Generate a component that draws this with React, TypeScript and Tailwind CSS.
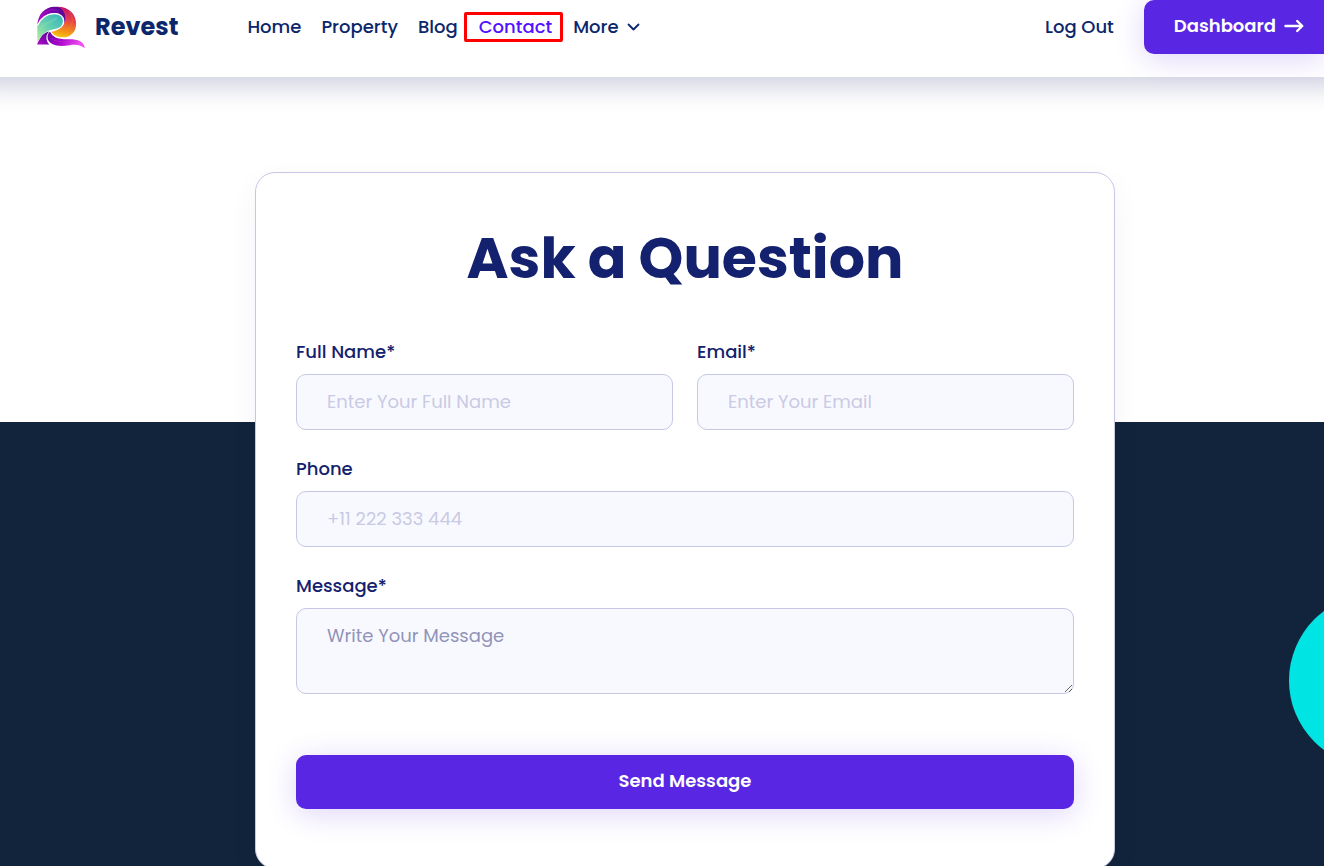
import type { ReactNode } from "react";

function LogoMark() {
  return (
    <svg viewBox="50 16 146 130" className="h-[43px] w-12 shrink-0" aria-hidden="true">
      <defs>
        <linearGradient id="sun" x1="0.6" y1="0" x2="0.4" y2="1">
          <stop offset="0" stopColor="#c40e6c" />
          <stop offset="0.4" stopColor="#e8414b" />
          <stop offset="0.75" stopColor="#f38b1c" />
          <stop offset="1" stopColor="#f6c40f" />
        </linearGradient>
        <linearGradient id="crest" x1="0" y1="1" x2="1" y2="0.2">
          <stop offset="0" stopColor="#b012c8" />
          <stop offset="0.5" stopColor="#8a05b4" />
          <stop offset="1" stopColor="#4d0793" />
        </linearGradient>
        <linearGradient id="sea" x1="0.9" y1="0" x2="0.1" y2="1">
          <stop offset="0" stopColor="#35b5bd" />
          <stop offset="0.5" stopColor="#66cfb0" />
          <stop offset="1" stopColor="#b4ef9c" />
        </linearGradient>
        <linearGradient id="tail" x1="0" y1="0" x2="1" y2="0.3">
          <stop offset="0" stopColor="#6a04a0" />
          <stop offset="0.5" stopColor="#a808ca" />
          <stop offset="1" stopColor="#f14df2" />
        </linearGradient>
      </defs>
      <path d="M108 18C146 16 169 40 169 70C169 94 152 111 127 111C112 111 100 104 94 94C116 91 134 77 134 56C134 38 126 25 108 18Z" fill="url(#sun)" />
      <path d="M148 33C170 60 153 87 124 100" fill="none" stroke="#f9a01b" strokeOpacity="0.2" strokeWidth="5" />
      <path d="M51 79C51 42 73 18 104 18C128 18 142 41 134 68C131 50 120 37 103 37C80 37 64 52 51 79Z" fill="url(#crest)" />
      <path d="M58 56C73 29 97 22 116 31" fill="none" stroke="#d31bd0" strokeOpacity="0.35" strokeWidth="4" />
      <path d="M51 76C62 51 80 39 103 39C121 39 131 49 131 61C131 77 117 86 101 88C78 91 66 103 51 129Z" fill="url(#sea)" />
      <path d="M51 76C62 51 80 39 103 39C121 39 131 49 131 61C131 77 117 86 101 88C78 91 66 103 51 129" fill="none" stroke="#fff" strokeWidth="4" />
      <path d="M60 84C76 62 96 68 110 51" fill="none" stroke="#a8ecb4" strokeOpacity="0.25" strokeWidth="6" />
      <path d="M51 133V130C61 108 70 97 87 93C75 104 76 122 88 133Z" fill="url(#crest)" />
      <path d="M90 94C97 110 113 118 148 117C175 117 194 124 195 144C181 134 167 132 149 135C117 142 82 134 82 111C82 102 85 97 90 94Z" fill="url(#tail)" />
      <path d="M92 113C110 130 145 121 174 128" fill="none" stroke="#df36e9" strokeOpacity="0.35" strokeWidth="3" />
    </svg>
  );
}

function Chevron() {
  return (
    <svg viewBox="0 0 13 8" className="h-2 w-[13px]" fill="none" stroke="currentColor" strokeWidth="1.8" strokeLinecap="round" strokeLinejoin="round" aria-hidden="true">
      <path d="M1.500 1.500 6.500 6.500l5-5" />
    </svg>
  );
}

function LongArrow() {
  return (
    <svg viewBox="0 0 20 14" className="h-3.5 w-5" fill="none" stroke="currentColor" strokeWidth="2.4" strokeLinecap="round" strokeLinejoin="round" aria-hidden="true">
      <path d="M1.500 7H18M13.200 2 18.300 7 13.200 12" />
    </svg>
  );
}

const control =
  "block w-full rounded-[10px] border border-[#c5c7e4] bg-[#f8f9ff] px-[30px] text-lg font-normal text-[#13216e] outline-none focus:border-[#5927e3]";

function Field({ id, label, children }: { id: string; label: string; children: ReactNode }) {
  return (
    <div>
      <label htmlFor={id} className="mb-2 block text-lg leading-7 font-medium">
        {label}
      </label>
      {children}
    </div>
  );
}

export default function App() {
  return (
    <div className="min-h-screen overflow-x-hidden bg-white font-['Poppins','Inter',sans-serif] text-[#13216e]">
      <header className="relative z-10 flex h-[77px] items-start bg-white pl-[37px] text-lg font-medium text-[#0c266c] shadow-[0_-14px_24px_24px_rgba(20,30,100,0.2)]">
        <a href="#home" className="flex h-[54px] items-center gap-2.5">
          <LogoMark />
          <span className="text-2xl font-bold">Revest</span>
        </a>
        <nav className="ml-[69px] flex h-[54px] items-center gap-5">
          <a href="#home">Home</a>
          <a href="#property">Property</a>
          <div className="flex items-center gap-1.5">
            <a href="#blog">Blog</a>
            <a
              href="#contact"
              aria-current="page"
              className="flex h-[30px] items-center rounded-xs border-3 border-[#ff0000] pr-2 pl-3 text-[#5012ff]"
            >
              Contact
            </a>
            <button type="button" className="ml-1 flex items-center gap-2">
              More
              <Chevron />
            </button>
          </div>
        </nav>
        <div className="ml-auto flex h-[54px] items-center gap-[30px]">
          <a href="#logout">Log Out</a>
          <a
            href="#dashboard"
            className="flex h-full items-center gap-2 rounded-l-[10px] bg-[#5927e3] pr-5 pb-0.5 pl-[30px] font-semibold text-white shadow-[0_5px_30px_rgba(89,39,227,0.2)]"
          >
            Dashboard
            <LongArrow />
          </a>
        </div>
      </header>

      <main className="relative overflow-hidden bg-[linear-gradient(to_bottom,#fff_345px,#12243b_345px)] pt-[95px] pb-20 pl-[46px]">
        <div className="absolute top-[517px] -right-[138px] size-[173px] rounded-full bg-[#00e4e3]" />
        <form
          className="relative mx-auto max-w-[860px] rounded-[20px] border border-[#c5c7e4] bg-white px-10 pt-[49px] pb-[59px] shadow-[0_10px_30px_rgba(19,33,110,0.05)]"
          onSubmit={(event) => event.preventDefault()}
        >
          <h1 className="text-center text-[57px] leading-[72px] font-bold">Ask a Question</h1>
          <div className="mt-11 grid grid-cols-2 gap-6">
            <Field id="name" label="Full Name*">
              <input id="name" type="text" placeholder="Enter Your Full Name" className={`${control} h-14 pb-0.5 placeholder:text-[#c9cae3]`} />
            </Field>
            <Field id="email" label="Email*">
              <input id="email" type="email" placeholder="Enter Your Email" className={`${control} h-14 pb-0.5 placeholder:text-[#c9cae3]`} />
            </Field>
          </div>
          <div className="mt-[25px]">
            <Field id="phone" label="Phone">
              <input id="phone" type="tel" placeholder="+11 222 333 444" className={`${control} h-14 pb-0.5 placeholder:text-[#c9cae3]`} />
            </Field>
          </div>
          <div className="mt-[25px]">
            <Field id="message" label="Message*">
              <textarea id="message" placeholder="Write Your Message" className={`${control} h-[86px] resize-y py-[13px] placeholder:text-[#9193b8]`} />
            </Field>
          </div>
          <button
            type="submit"
            className="mt-[61px] h-[54px] w-full rounded-[10px] bg-[#5927e3] pb-0.5 text-lg font-semibold text-white shadow-[0_5px_30px_rgba(89,39,227,0.2)]"
          >
            Send Message
          </button>
        </form>
      </main>
    </div>
  );
}
